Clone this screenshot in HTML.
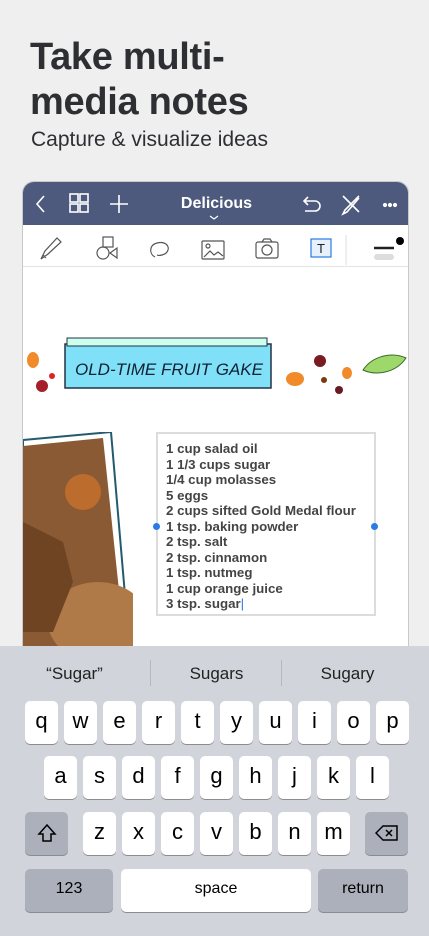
<!DOCTYPE html>
<html><head><meta charset="utf-8"><style>
*{margin:0;padding:0;box-sizing:border-box}
html,body{width:429px;height:936px;overflow:hidden}
body{background:#efeff0;font-family:"Liberation Sans",sans-serif;position:relative}
.h1{position:absolute;left:30px;top:35px;font-size:38px;font-weight:bold;line-height:45px;color:#2d2f33;letter-spacing:-0.3px}
.sub{position:absolute;left:31px;top:128px;font-size:21px;color:#2d2f33}
.dev{position:absolute;left:22px;top:181px;width:387px;height:755px;background:#fff;border-radius:12px 12px 0 0;overflow:hidden;border:1px solid #c9c9cc}
.nav{height:43px;background:#4d5a7d;position:relative;color:#fff}
.tool{height:42px;border-bottom:1px solid #e3e3e3;position:relative}
.k{position:absolute;height:43px;background:#fff;border-radius:5px;box-shadow:0 1px 0 #8a8c90;font-size:22px;text-align:center;line-height:40px;color:#000}
.g{background:#abb0ba}
.sg{position:absolute;top:18px;font-size:17px;color:#222;text-align:center;width:129px}
.rc{position:absolute;left:133px;top:250px;width:220px;height:184px;border:2px solid #dcdcdc;font-weight:bold;font-size:13.3px;line-height:15.5px;color:#444;padding:7px 0 0 8px}
</style></head><body>
<div class="h1">Take multi-<br>media notes</div>
<div class="sub">Capture &amp; visualize ideas</div>
<div class="dev">
<div class="nav">
<svg width="387" height="43" style="position:absolute;left:0;top:0" fill="none" stroke="#fff" stroke-width="1.6">
<path d="M21 14l-7 8 7 8"/>
<rect x="47" y="12" width="8" height="8"/><rect x="57" y="12" width="8" height="8"/><rect x="47" y="22" width="8" height="8"/><rect x="57" y="22" width="8" height="8"/>
<path d="M96 13v18M87 22h18"/>
<path d="M187 34l4 3 4-3" stroke-width="1.2"/>
<path d="M282 19h10a5 5 0 010 10h-10M285 15l-4 4 4 4"/>
<path d="M320 14l16 16M336 14l-14 14-2 4 4-2 12-14"/>
<circle cx="362" cy="23" r="1.3" fill="#fff"/><circle cx="367" cy="23" r="1.3" fill="#fff"/><circle cx="372" cy="23" r="1.3" fill="#fff"/>
</svg>
<div style="position:absolute;left:0;width:387px;text-align:center;top:13px;font-size:16px;font-weight:bold">Delicious</div>
</div>
<div class="tool">
<svg width="387" height="42" style="position:absolute;left:0;top:0" fill="none" stroke="#555" stroke-width="1.2">
<path d="M18 34l4-8 12-13 4 4-13 12zM20 30l3 3"/>
<rect x="80" y="12" width="10" height="10"/><circle cx="80" cy="28" r="6"/><path d="M94 23v10l-7-5z"/>
<path d="M132 32c-6-3-6-12 2-14 8-2 14 3 10 9-2 3-8 4-10 3"/>
<rect x="179" y="16" width="22" height="18" rx="1"/><circle cx="185" cy="21" r="2"/><path d="M181 32l6-6 4 4 4-3 5 4"/>
<rect x="233" y="17" width="22" height="16" rx="2"/><circle cx="244" cy="25" r="5"/><path d="M239 17l2-3h6l2 3"/>
<rect x="288" y="14" width="20" height="18" stroke="#2a7be4" fill="#e7f1fc"/><text x="294" y="28" font-size="13" fill="#222" stroke="none" font-family="Liberation Sans">T</text>
<line x1="323" y1="10" x2="323" y2="40" stroke="#e3e3e3"/>
<path d="M351 23h20" stroke="#222" stroke-width="2.5"/><rect x="351" y="29" width="20" height="6" rx="3" fill="#ddd" stroke="none"/><circle cx="377" cy="16" r="4" fill="#000" stroke="none"/>
</svg>
</div>
<svg width="387" height="100" style="position:absolute;left:0;top:148px">
<rect x="42" y="14" width="206" height="44" fill="#7fe0f7" stroke="#234" stroke-width="1.5"/>
<rect x="44" y="8" width="200" height="8" fill="#cfe" stroke="#234"/>
<text x="52" y="45" font-size="17" font-style="italic" fill="#123" font-family="Liberation Sans">OLD-TIME FRUIT GAKE</text>
<ellipse cx="10" cy="30" rx="6" ry="8" fill="#f08a2a"/><circle cx="19" cy="56" r="6" fill="#a3202a"/><circle cx="29" cy="46" r="3" fill="#d22"/>
<ellipse cx="272" cy="49" rx="9" ry="7" fill="#f08a2a"/><circle cx="297" cy="31" r="6" fill="#7a1a22"/><circle cx="301" cy="50" r="3" fill="#7a3a10"/><ellipse cx="324" cy="43" rx="5" ry="6" fill="#f08a2a"/><circle cx="316" cy="60" r="4" fill="#6a1a22"/>
<path d="M340 40c10-15 30-18 43-12-10 15-30 18-43 12z" fill="#9ed86a" stroke="#3a6a2a"/>
</svg>
<svg width="110" height="215" style="position:absolute;left:0;top:250px">
<path d="M0 8l88-8 18 210H0z" fill="#fff" stroke="#235b6e" stroke-width="2"/>
<path d="M0 14l80-8 22 210H0z" fill="#8a5a34"/>
<ellipse cx="75" cy="190" rx="50" ry="40" fill="#b07a48"/>
<path d="M0 90l40 20 10 40-20 50H0z" fill="#6e4422"/>
<circle cx="60" cy="60" r="18" fill="#c8702a" opacity=".8"/>
</svg>
<div class="rc">1 cup salad oil<br>1 1/3 cups sugar<br>1/4 cup molasses<br>5 eggs<br>2 cups sifted Gold Medal flour<br>1 tsp. baking powder<br>2 tsp. salt<br>2 tsp. cinnamon<br>1 tsp. nutmeg<br>1 cup orange juice<br>3 tsp. sugar<span style="color:#2a7be4;font-weight:normal">|</span></div>
<div style="position:absolute;left:130px;top:341px;width:7px;height:7px;border-radius:50%;background:#2a7be4"></div>
<div style="position:absolute;left:348px;top:341px;width:7px;height:7px;border-radius:50%;background:#2a7be4"></div>
</div>
<div style="position:absolute;left:0;top:646px;width:429px;height:290px;background:#d1d4da">
<div class="sg" style="left:10px">“Sugar”</div><div class="sg" style="left:152px">Sugars</div><div class="sg" style="left:283px">Sugary</div>
<div style="position:absolute;left:150px;top:14px;width:1px;height:26px;background:#b5b8be"></div>
<div style="position:absolute;left:281px;top:14px;width:1px;height:26px;background:#b5b8be"></div>
<div class="k" style="left:25px;top:55px;width:33px">q</div><div class="k" style="left:64px;top:55px;width:33px">w</div><div class="k" style="left:103px;top:55px;width:33px">e</div><div class="k" style="left:142px;top:55px;width:33px">r</div><div class="k" style="left:181px;top:55px;width:33px">t</div><div class="k" style="left:220px;top:55px;width:33px">y</div><div class="k" style="left:259px;top:55px;width:33px">u</div><div class="k" style="left:298px;top:55px;width:33px">i</div><div class="k" style="left:337px;top:55px;width:33px">o</div><div class="k" style="left:376px;top:55px;width:33px">p</div>
<div class="k" style="left:44px;top:110px;width:33px">a</div><div class="k" style="left:83px;top:110px;width:33px">s</div><div class="k" style="left:122px;top:110px;width:33px">d</div><div class="k" style="left:161px;top:110px;width:33px">f</div><div class="k" style="left:200px;top:110px;width:33px">g</div><div class="k" style="left:239px;top:110px;width:33px">h</div><div class="k" style="left:278px;top:110px;width:33px">j</div><div class="k" style="left:317px;top:110px;width:33px">k</div><div class="k" style="left:356px;top:110px;width:33px">l</div>
<div class="k g" style="left:25px;top:166px;width:43px"><svg width="20" height="20" style="margin-top:11px" fill="none" stroke="#000" stroke-width="1.5"><path d="M10 2l8 9h-4v7H6v-7H2z"/></svg></div>
<div class="k" style="left:83px;top:166px;width:33px">z</div><div class="k" style="left:122px;top:166px;width:33px">x</div><div class="k" style="left:161px;top:166px;width:33px">c</div><div class="k" style="left:200px;top:166px;width:33px">v</div><div class="k" style="left:239px;top:166px;width:33px">b</div><div class="k" style="left:278px;top:166px;width:33px">n</div><div class="k" style="left:317px;top:166px;width:33px">m</div>
<div class="k g" style="left:365px;top:166px;width:43px"><svg width="24" height="18" style="margin-top:12px" fill="none" stroke="#000" stroke-width="1.5"><path d="M8 2h14v14H8L1 9z M11 6l6 6M17 6l-6 6"/></svg></div>
<div class="k g" style="left:25px;top:223px;width:88px;font-size:16px">123</div>
<div class="k" style="left:121px;top:223px;width:190px;font-size:16px">space</div>
<div class="k g" style="left:318px;top:223px;width:90px;font-size:16px">return</div>
</div>
</body></html>
